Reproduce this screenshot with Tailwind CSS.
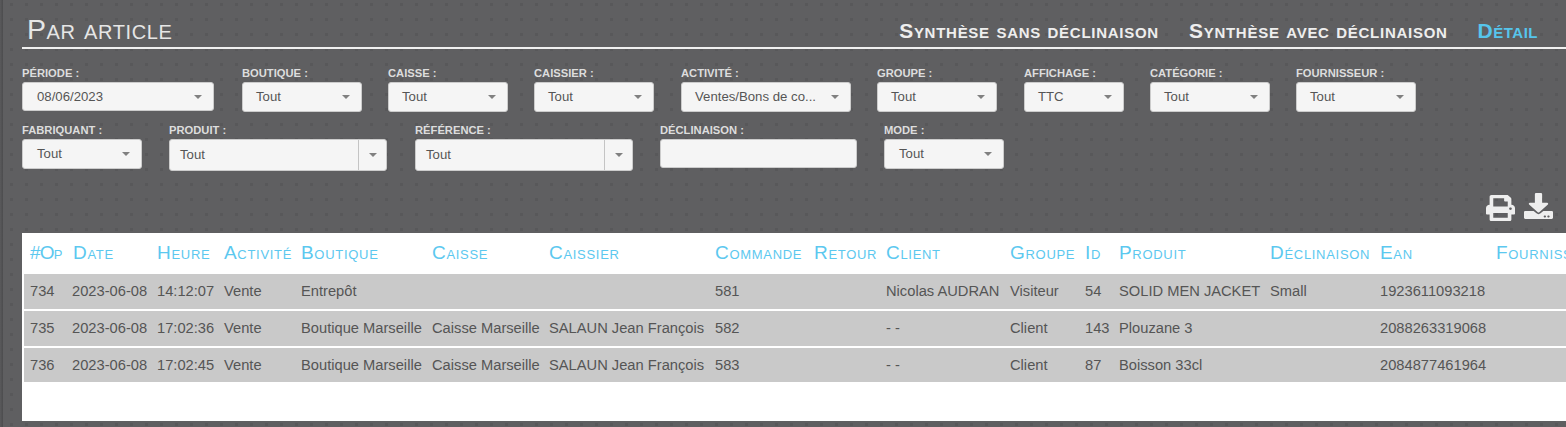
<!DOCTYPE html>
<html lang="fr">
<head>
    <meta charset="UTF-8">
    <title>Par article</title>
    <script src="https://cdn.jsdelivr.net/npm/@tailwindcss/browser@4"></script>
</head>
<body class="h-[427px] w-[1566px] overflow-hidden flex bg-[#5f5f61] font-['Liberation_Sans',Arial,sans-serif]">
    <!-- Left edge -->
    <div class="w-[3px] shrink-0 bg-gradient-to-r from-[#5a5a5c] to-[#4c4c4e]"></div>

    <div class="flex-1 min-w-0 pl-[19px] bg-[radial-gradient(circle,#58585a_1.5px,transparent_1.6px)] bg-[length:15px_15px] bg-[position:1px_-3px]">
        <!-- Title and tabs -->
        <div class="h-[49px] pt-[13px] border-b-2 border-[#f0f0f0] flex justify-between items-start [font-variant:small-caps]">
            <h1 class="text-[28.5px] tracking-[0.6px] leading-[32px] text-[#e6e6e6] pl-[5px]">Par article</h1>
            <div class="flex gap-[30px] pr-[28px] pt-[5px] text-[21px] tracking-[0.73px] leading-[26px] font-bold text-[#eeeeee]">
                <a>Synthèse sans déclinaison</a>
                <a>Synthèse avec déclinaison</a>
                <a class="text-[#56c5ec] tracking-[0.5px]">Détail</a>
            </div>
        </div>

        <!-- Filters row 1 -->
        <div class="flex gap-x-[26px] mt-[18px]">
            <div class="mr-[2px]">
                <label class="block text-[11.2px] leading-[12px] h-[15px] font-bold uppercase text-[#dddddd]">Période :</label>
                <div class="h-[29px] w-[192px] pl-[14px] pr-[11px] flex items-center justify-between bg-[#f5f5f5] border border-[#cccccc] rounded-[3px] text-[13.2px] text-[#555555]">
                    <span>08/06/2023</span><i class="border-x-4 border-t-4 border-x-transparent border-t-[#808080]"></i>
                </div>
            </div>
            <div>
                <label class="block text-[11.2px] leading-[12px] h-[15px] font-bold uppercase text-[#dddddd]">Boutique :</label>
                <div class="h-[30px] w-[120px] pl-[13px] pr-[11px] flex items-center justify-between bg-[#f5f5f5] border border-[#cccccc] rounded-[3px] text-[13.2px] text-[#555555]">
                    <span>Tout</span><i class="border-x-4 border-t-4 border-x-transparent border-t-[#808080]"></i>
                </div>
            </div>
            <div>
                <label class="block text-[11.2px] leading-[12px] h-[15px] font-bold uppercase text-[#dddddd]">Caisse :</label>
                <div class="h-[30px] w-[120px] pl-[13px] pr-[11px] flex items-center justify-between bg-[#f5f5f5] border border-[#cccccc] rounded-[3px] text-[13.2px] text-[#555555]">
                    <span>Tout</span><i class="border-x-4 border-t-4 border-x-transparent border-t-[#808080]"></i>
                </div>
            </div>
            <div>
                <label class="block text-[11.2px] leading-[12px] h-[15px] font-bold uppercase text-[#dddddd]">Caissier :</label>
                <div class="h-[30px] w-[120px] pl-[13px] pr-[11px] flex items-center justify-between bg-[#f5f5f5] border border-[#cccccc] rounded-[3px] text-[13.2px] text-[#555555]">
                    <span>Tout</span><i class="border-x-4 border-t-4 border-x-transparent border-t-[#808080]"></i>
                </div>
            </div>
            <div class="ml-px">
                <label class="block text-[11.2px] leading-[12px] h-[15px] font-bold uppercase text-[#dddddd]">Activité :</label>
                <div class="h-[30px] w-[170px] pl-[13px] pr-[11px] flex items-center justify-between bg-[#f5f5f5] border border-[#cccccc] rounded-[3px] text-[13.2px] text-[#555555]">
                    <span>Ventes/Bons de co...</span><i class="border-x-4 border-t-4 border-x-transparent border-t-[#808080]"></i>
                </div>
            </div>
            <div>
                <label class="block text-[11.2px] leading-[12px] h-[15px] font-bold uppercase text-[#dddddd]">Groupe :</label>
                <div class="h-[30px] w-[120px] pl-[13px] pr-[11px] flex items-center justify-between bg-[#f5f5f5] border border-[#cccccc] rounded-[3px] text-[13.2px] text-[#555555]">
                    <span>Tout</span><i class="border-x-4 border-t-4 border-x-transparent border-t-[#808080]"></i>
                </div>
            </div>
            <div class="ml-px">
                <label class="block text-[11.2px] leading-[12px] h-[15px] font-bold uppercase text-[#dddddd]">Affichage :</label>
                <div class="h-[30px] w-[100px] pl-[13px] pr-[11px] flex items-center justify-between bg-[#f5f5f5] border border-[#cccccc] rounded-[3px] text-[13.2px] text-[#555555]">
                    <span>TTC</span><i class="border-x-4 border-t-4 border-x-transparent border-t-[#808080]"></i>
                </div>
            </div>
            <div>
                <label class="block text-[11.2px] leading-[12px] h-[15px] font-bold uppercase text-[#dddddd]">Catégorie :</label>
                <div class="h-[30px] w-[120px] pl-[13px] pr-[11px] flex items-center justify-between bg-[#f5f5f5] border border-[#cccccc] rounded-[3px] text-[13.2px] text-[#555555]">
                    <span>Tout</span><i class="border-x-4 border-t-4 border-x-transparent border-t-[#808080]"></i>
                </div>
            </div>
            <div>
                <label class="block text-[11.2px] leading-[12px] h-[15px] font-bold uppercase text-[#dddddd]">Fournisseur :</label>
                <div class="h-[30px] w-[120px] pl-[13px] pr-[11px] flex items-center justify-between bg-[#f5f5f5] border border-[#cccccc] rounded-[3px] text-[13.2px] text-[#555555]">
                    <span>Tout</span><i class="border-x-4 border-t-4 border-x-transparent border-t-[#808080]"></i>
                </div>
            </div>
        </div>

        <!-- Filters row 2 -->
        <div class="flex gap-x-[27px] mt-[12px]">
            <div>
                <label class="block text-[11.2px] leading-[12px] h-[15px] font-bold uppercase text-[#dddddd]">Fabriquant :</label>
                <div class="h-[30px] w-[120px] pl-[14px] pr-[11px] flex items-center justify-between bg-[#f5f5f5] border border-[#cccccc] rounded-[3px] text-[13.2px] text-[#555555]">
                    <span>Tout</span><i class="border-x-4 border-t-4 border-x-transparent border-t-[#808080]"></i>
                </div>
            </div>
            <div class="mr-px">
                <label class="block text-[11.2px] leading-[12px] h-[15px] font-bold uppercase text-[#dddddd]">Produit :</label>
                <div class="h-[32px] w-[218px] pl-[10px] flex items-center bg-[#f5f5f5] border border-[#cccccc] rounded-[3px] text-[13.2px] text-[#555555]">
                    <span class="flex-1">Tout</span>
                    <div class="w-[28px] h-full flex items-center justify-center border-l border-[#c4c4c4]"><i class="border-x-4 border-t-4 border-x-transparent border-t-[#808080]"></i></div>
                </div>
            </div>
            <div>
                <label class="block text-[11.2px] leading-[12px] h-[15px] font-bold uppercase text-[#dddddd]">Référence :</label>
                <div class="h-[32px] w-[218px] pl-[10px] flex items-center bg-[#f5f5f5] border border-[#cccccc] rounded-[3px] text-[13.2px] text-[#555555]">
                    <span class="flex-1">Tout</span>
                    <div class="w-[28px] h-full flex items-center justify-center border-l border-[#c4c4c4]"><i class="border-x-4 border-t-4 border-x-transparent border-t-[#808080]"></i></div>
                </div>
            </div>
            <div>
                <label class="block text-[11.2px] leading-[12px] h-[15px] font-bold uppercase text-[#dddddd]">Déclinaison :</label>
                <div class="h-[29px] w-[197px] bg-[#f5f5f5] border border-[#cccccc] rounded-[3px]"></div>
            </div>
            <div>
                <label class="block text-[11.2px] leading-[12px] h-[15px] font-bold uppercase text-[#dddddd]">Mode :</label>
                <div class="h-[30px] w-[120px] pl-[14px] pr-[11px] flex items-center justify-between bg-[#f5f5f5] border border-[#cccccc] rounded-[3px] text-[13.2px] text-[#555555]">
                    <span>Tout</span><i class="border-x-4 border-t-4 border-x-transparent border-t-[#808080]"></i>
                </div>
            </div>
        </div>

        <!-- Print and export -->
        <div class="h-[62px] flex justify-end items-start gap-[9px] pr-[13px] pt-[22px]">
            <svg class="w-[29px] h-[26px] mt-[2px]" viewBox="0 0 512 512" preserveAspectRatio="none" fill="#eeeeee"><path d="M448 192V77.25c0-8.49-3.37-16.62-9.37-22.63L393.37 9.37c-6-6-14.14-9.37-22.63-9.37H96C78.33 0 64 14.33 64 32v160c-35.35 0-64 28.65-64 64v112c0 8.84 7.16 16 16 16h48v96c0 17.67 14.33 32 32 32h320c17.67 0 32-14.33 32-32v-96h48c8.84 0 16-7.16 16-16V256c0-35.35-28.65-64-64-64zm-64 256H128v-96h256v96zm0-224H128V64h192v48c0 8.84 7.16 16 16 16h48v96zm48 72c-13.25 0-24-10.75-24-24 0-13.26 10.75-24 24-24s24 10.74 24 24c0 13.25-10.75 24-24 24z"/></svg>
            <svg class="w-[29px] h-[26px]" viewBox="0 0 512 512" preserveAspectRatio="none" fill="#eeeeee"><path d="M216 0h80c13.3 0 24 10.7 24 24v168h87.7c17.8 0 26.7 21.5 14.1 34.1L269.7 378.3c-7.5 7.5-19.8 7.5-27.3 0L90.1 226.1c-12.6-12.6-3.7-34.1 14.1-34.1H192V24c0-13.3 10.7-24 24-24zm296 376v112c0 13.3-10.7 24-24 24H24c-13.3 0-24-10.7-24-24V376c0-13.3 10.7-24 24-24h146.7l49 49c20.1 20.1 52.5 20.1 72.6 0l49-49H488c13.3 0 24 10.7 24 24zm-124 88c0-11-9-20-20-20s-20 9-20 20 9 20 20 20 20-9 20-20zm64 0c0-11-9-20-20-20s-20 9-20 20 9 20 20 20 20-9 20-20z"/></svg>
        </div>

        <!-- Table -->
        <div class="h-[188px] bg-white overflow-hidden pl-[2px]">
            <table class="table-fixed w-[1650px] border-separate border-spacing-y-[2px] -mt-[2px] text-[14.7px] text-[#555555]">
                <colgroup>
                    <col class="w-[42px]"><col class="w-[85px]"><col class="w-[67px]"><col class="w-[77px]">
                    <col class="w-[131px]"><col class="w-[117px]"><col class="w-[166px]"><col class="w-[99px]">
                    <col class="w-[72px]"><col class="w-[124px]"><col class="w-[75px]"><col class="w-[34px]">
                    <col class="w-[151px]"><col class="w-[110px]"><col class="w-[117px]"><col class="w-[183px]">
                </colgroup>
                <thead>
                    <tr class="h-[39px] text-left text-[19px] tracking-[0.7px] font-normal text-[#5cc8ef] [font-variant:small-caps] whitespace-nowrap [&_th]:pt-[2px]">
                        <th class="font-normal pl-[6px] tracking-[-0.8px]">#Op</th>
                        <th class="font-normal pl-[7px]">Date</th>
                        <th class="font-normal pl-[6px]">Heure</th>
                        <th class="font-normal pl-[6px]">Activité</th>
                        <th class="font-normal pl-[6px]">Boutique</th>
                        <th class="font-normal pl-[6px]">Caisse</th>
                        <th class="font-normal pl-[6px]">Caissier</th>
                        <th class="font-normal pl-[6px]">Commande</th>
                        <th class="font-normal pl-[6px]">Retour</th>
                        <th class="font-normal pl-[6px]">Client</th>
                        <th class="font-normal pl-[6px]">Groupe</th>
                        <th class="font-normal pl-[6px]">Id</th>
                        <th class="font-normal pl-[6px]">Produit</th>
                        <th class="font-normal pl-[6px]">Déclinaison</th>
                        <th class="font-normal pl-[6px]">Ean</th>
                        <th class="font-normal pl-[5px]">Fournisseur</th>
                    </tr>
                </thead>
                <tbody class="[&_td]:pl-[6px] [&_td]:whitespace-nowrap [&_td]:bg-[#c9c9c9]">
                    <tr class="h-[35px]">
                        <td>734</td><td>2023-06-08</td><td>14:12:07</td><td>Vente</td><td>Entrepôt</td><td></td><td></td><td>581</td><td></td><td>Nicolas AUDRAN</td><td>Visiteur</td><td>54</td><td>SOLID MEN JACKET</td><td>Small</td><td>1923611093218</td><td></td>
                    </tr>
                    <tr class="h-[35px]">
                        <td>735</td><td>2023-06-08</td><td>17:02:36</td><td>Vente</td><td>Boutique Marseille</td><td>Caisse Marseille</td><td>SALAUN Jean François</td><td>582</td><td></td><td>- -</td><td>Client</td><td>143</td><td>Plouzane 3</td><td></td><td>2088263319068</td><td></td>
                    </tr>
                    <tr class="h-[34px]">
                        <td>736</td><td>2023-06-08</td><td>17:02:45</td><td>Vente</td><td>Boutique Marseille</td><td>Caisse Marseille</td><td>SALAUN Jean François</td><td>583</td><td></td><td>- -</td><td>Client</td><td>87</td><td>Boisson 33cl</td><td></td><td>2084877461964</td><td></td>
                    </tr>
                </tbody>
            </table>
        </div>
    </div>
</body>
</html>
